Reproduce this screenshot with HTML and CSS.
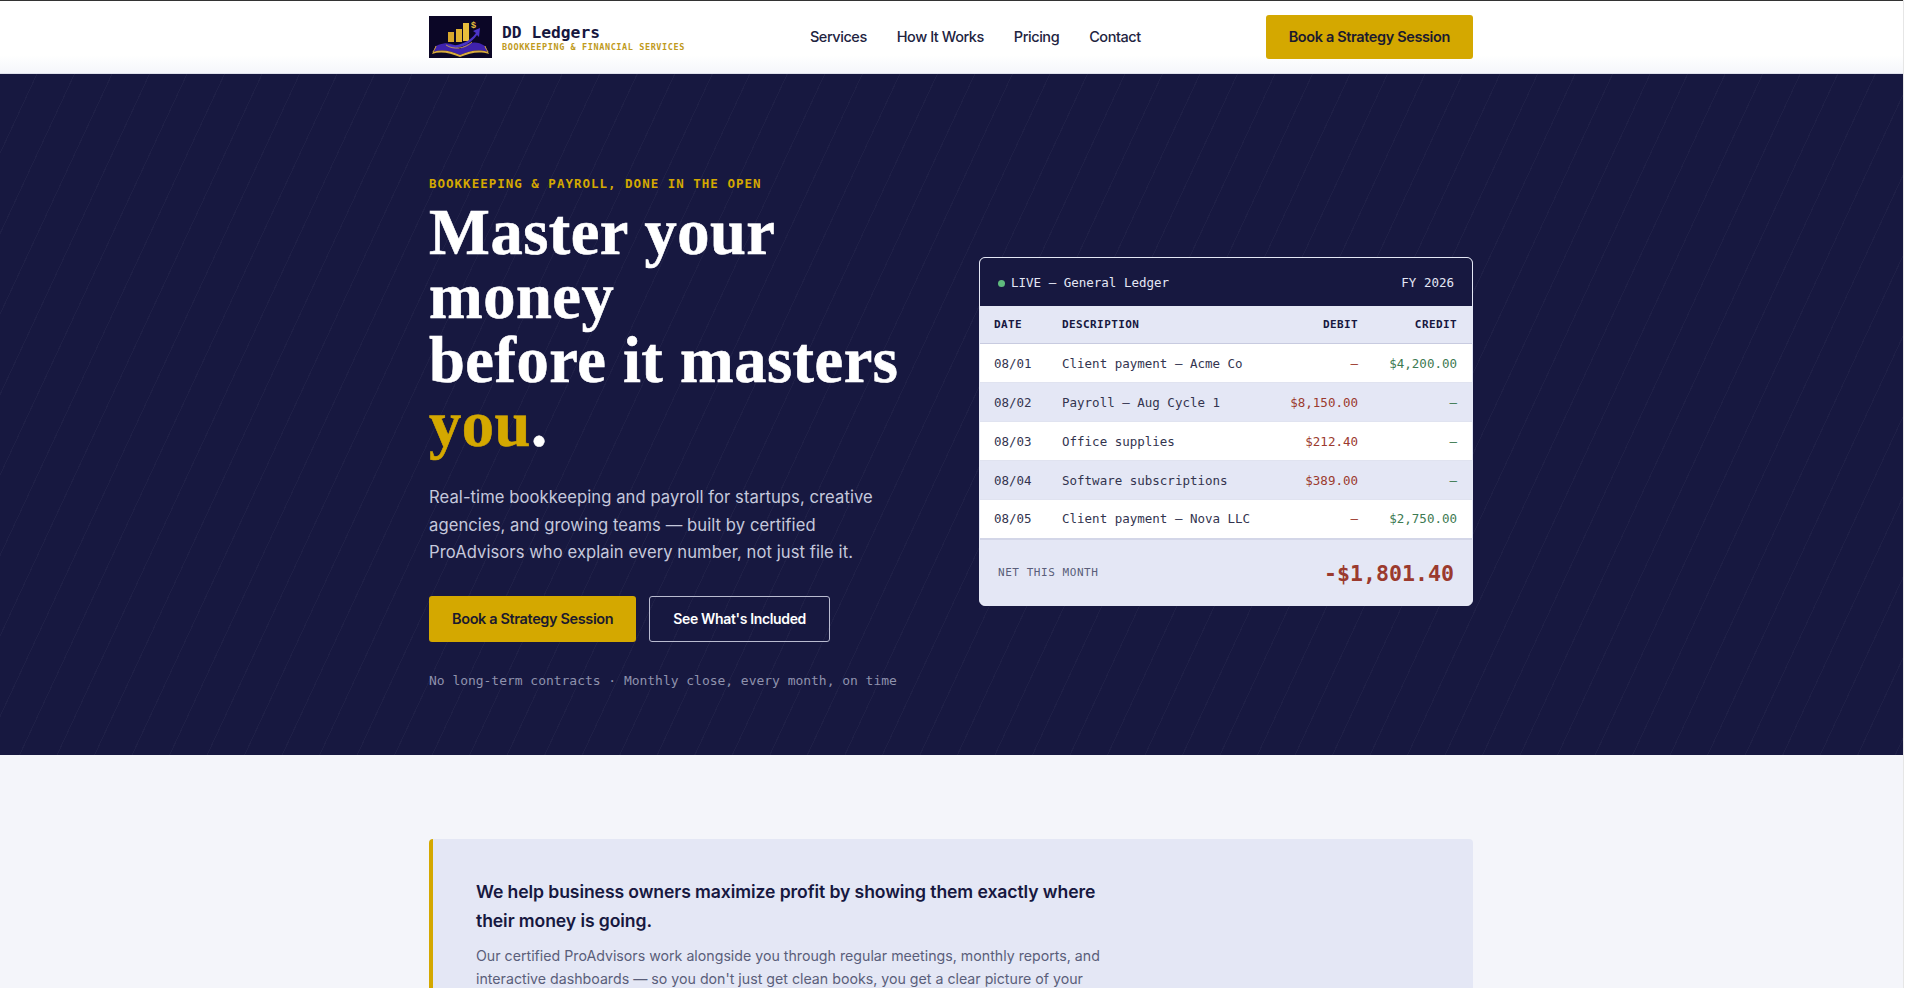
FILE: index.html
```html
<!DOCTYPE html>
<html>
<head>
    <title>DD Ledgers</title>
    <link rel="stylesheet" href="styles.css">
</head>
<body>
<div class="page">
    <header class="nav">
        <div class="wrap nav-inner">
            <a class="brand" href="#">
                <svg class="logo" viewBox="0 0 63 42">
                    <rect width="63" height="42" fill="#0b0626"/>
                    <path d="M7 30 C16 25 25 27 31 33 C38 26 47 24 56 30 L59 36 C49 33 40 35 31 39 C22 35 13 33 4 36 Z" fill="#3f22ad"/>
                    <path d="M4 36 C13 33 22 35 31 39 C40 35 49 33 59 36 L60 38 C50 35 41 37 31 41 C21 37 12 35 3 38 Z" fill="#d9ab3c"/>
                    <path d="M7 30 C6 33 5 34 4 36" stroke="#d9ab3c" stroke-width="1" fill="none"/>
                    <path d="M56 30 C57 33 58 34 59 36" stroke="#d9ab3c" stroke-width="1" fill="none"/>
                    <rect x="19" y="16" width="6" height="10" fill="#d8a72c"/>
                    <rect x="27" y="13" width="6" height="13" fill="#e0b232"/>
                    <rect x="34" y="7" width="6" height="18" fill="#e8bd3c"/>
                    <path d="M15 26 C17 31 36 32 47 17 L44 15 L51 12 L50 21 L48 19 C38 33 20 36 15 26 Z" fill="#4a34c8"/>
                    <path d="M17 29 C24 34 36 33 43 26" stroke="#d9ab3c" stroke-width=".8" fill="none"/>
                    <text x="42" y="12" class="logo-dollar">$</text>
                </svg>
                <span class="brand-text">
                    <span class="brand-name">DD Ledgers</span>
                    <span class="brand-sub">BOOKKEEPING &amp; FINANCIAL SERVICES</span>
                </span>
            </a>
            <nav class="nav-links">
                <a href="#">Services</a>
                <a href="#">How It Works</a>
                <a href="#">Pricing</a>
                <a href="#">Contact</a>
            </nav>
            <a class="btn btn-gold btn-nav" href="#">Book a Strategy Session</a>
        </div>
    </header>

    <section class="hero">
        <div class="wrap hero-grid">
            <div class="hero-copy">
                <p class="eyebrow">BOOKKEEPING &amp; PAYROLL, DONE IN THE OPEN</p>
                <h1>Master your<br>money<br>before it masters<br><em>you</em>.</h1>
                <p class="lede">Real-time bookkeeping and payroll for startups, creative<br>agencies, and growing teams — built by certified<br>ProAdvisors who explain every number, not just file it.</p>
                <div class="hero-btns">
                    <a class="btn btn-gold" href="#">Book a Strategy Session</a>
                    <a class="btn btn-line" href="#">See What's Included</a>
                </div>
                <p class="note">No long-term contracts · Monthly close, every month, on time</p>
            </div>

            <div class="ledger">
                <div class="ledger-head">
                    <span><i class="dot"></i>LIVE — General Ledger</span>
                    <span>FY 2026</span>
                </div>
                <table>
                    <thead>
                        <tr><th class="c-date">DATE</th><th>DESCRIPTION</th><th class="num c-debit">DEBIT</th><th class="num c-credit">CREDIT</th></tr>
                    </thead>
                    <tbody>
                        <tr><td>08/01</td><td>Client payment — Acme Co</td><td class="num red">—</td><td class="num green">$4,200.00</td></tr>
                        <tr><td>08/02</td><td>Payroll — Aug Cycle 1</td><td class="num red">$8,150.00</td><td class="num green">—</td></tr>
                        <tr><td>08/03</td><td>Office supplies</td><td class="num red">$212.40</td><td class="num green">—</td></tr>
                        <tr><td>08/04</td><td>Software subscriptions</td><td class="num red">$389.00</td><td class="num green">—</td></tr>
                        <tr><td>08/05</td><td>Client payment — Nova LLC</td><td class="num red">—</td><td class="num green">$2,750.00</td></tr>
                    </tbody>
                </table>
                <div class="ledger-foot">
                    <span class="net-label">NET THIS MONTH</span>
                    <span class="net-value">-$1,801.40</span>
                </div>
            </div>
        </div>
    </section>

    <section class="about">
        <div class="wrap">
            <div class="callout">
                <h2>We help business owners maximize profit by showing them exactly where their money is going.</h2>
                <p>Our certified ProAdvisors work alongside you through regular meetings, monthly reports, and interactive dashboards — so you don't just get clean books, you get a clear picture of your</p>
            </div>
        </div>
    </section>
</div>
</body>
</html>
```

FILE: styles.css
```css
* { box-sizing: border-box; }
html, body { margin: 0; height: 988px; overflow: hidden; background: #fff; }
body { font-family: "Inter", "Liberation Sans", sans-serif; color: #171840; }
a { text-decoration: none; color: inherit; }
p, h1, h2 { margin: 0; }

.page { margin-right: 3px; height: 988px; background: #f4f5fa; border-top: 1px solid #333; box-shadow: 1px 0 0 #e6e6e6; }
.wrap { width: 1044px; margin-left: 429px; }

/* nav */
.nav { height: 73px; background: linear-gradient(#fff 75%, #f5f6fb); border-bottom: 1px solid #dfe1ec; }
.nav-inner { height: 72px; display: flex; align-items: center; justify-content: space-between; }
.brand { display: flex; align-items: center; gap: 10px; }
.logo { width: 63px; height: 42px; display: block; }
.logo-dollar { font: 700 9px "Liberation Sans", sans-serif; fill: #e8bd3c; }
.brand-text { display: flex; flex-direction: column; font-family: "DejaVu Sans Mono", monospace; font-weight: 700; }
.brand-name { font-size: 16.3px; line-height: 19px; color: #171840; }
.brand-sub { font-size: 8.5px; line-height: 10px; letter-spacing: .6px; color: #c09a1c; }
.nav-links { display: flex; gap: 30px; padding-bottom: 2px; font-size: 14.5px; font-weight: 500; letter-spacing: -.45px; color: #22233f; }

.btn { display: flex; align-items: center; height: 46px; border-radius: 3px; font-size: 14.5px; font-weight: 600; letter-spacing: -.37px; }
.btn-gold { padding: 0 23px; background: #d4a800; color: #1b1a2e; }
.btn-nav { height: 44px; padding-bottom: 2px; }
.btn-line { padding: 0 23px; border: 1px solid #b9bbd0; color: #fff; font-size: 14px; letter-spacing: -.35px; }

/* hero */
.hero {
    height: 681px;
    padding: 96px 0 63px;
    background: #171840 repeating-linear-gradient(115deg, transparent 0 33px, rgba(255,255,255,.032) 33px 34px);
}
.hero-grid { display: grid; grid-template-columns: 1fr 494px; align-items: center; height: 522px; }
.hero-copy { align-self: start; }
.eyebrow { font-family: "DejaVu Sans Mono", monospace; font-size: 12.5px; line-height: 20px; letter-spacing: 1px; color: #d4a800; margin-top: 4px; margin-bottom: 7px; font-weight: 700; }
h1 { font-family: "Liberation Serif", serif; font-weight: 700; font-size: 64.5px; line-height: 64px; letter-spacing: .5px; color: #fff; -webkit-text-stroke: .6px currentColor; }
h1 em { font-style: normal; color: #d4a800; }
.lede { margin-top: 27px; font-size: 16.6px; line-height: 27.5px; letter-spacing: .07px; color: #c5c8dc; }
.hero-btns { display: flex; gap: 13px; margin-top: 29px; }
.note { margin-top: 29px; font-family: "DejaVu Sans Mono", monospace; font-size: 13px; line-height: 20px; letter-spacing: -.03px; color: #8f92ad; }

/* ledger card */
.ledger { border: 1px solid #e4e7f5; border-radius: 6px; overflow: hidden; background: #fff; font-family: "DejaVu Sans Mono", monospace; }
.ledger-head { height: 48px; padding: 2px 18px 0; display: flex; align-items: center; justify-content: space-between; background: #171840; color: #e4e7f5; font-size: 12.5px; }
.dot { display: inline-block; width: 7px; height: 7px; margin-right: 6px; border-radius: 50%; background: #5fba7d; }
table { width: 100%; border-collapse: collapse; table-layout: fixed; font-size: 12.5px; color: #33344f; }
th { height: 38px; padding: 0 14px; background: #e4e7f5; border-bottom: 1px solid #c8cbe0; font-size: 11px; font-weight: 700; letter-spacing: .4px; color: #171840; text-align: left; }
.c-date { width: 68px; }
.c-debit { width: 110px; }
.c-credit { width: 100px; }
td { height: 39px; padding: 0 14px; border-bottom: 1px solid #e0e3f0; white-space: nowrap; }
td:last-child, th:last-child { padding-right: 15px; }
tbody tr:nth-child(even) td { background: #e4e7f5; }
tbody tr:last-child td { border-bottom: 2px solid #d3d6e8; }
.num { text-align: right; }
.red { color: #9b3a2e; }
.green { color: #3d7a52; }
.ledger-foot { height: 65px; padding: 3px 18px 0; display: flex; align-items: center; justify-content: space-between; background: #e4e7f5; }
.net-label { font-size: 11px; letter-spacing: .55px; color: #5a5e7a; margin-top: -3px; }
.net-value { font-size: 21.6px; font-weight: 700; color: #9b3a2e; }

/* about */
.about { padding-top: 84px; }
.callout { height: 149px; padding: 38px 43px 0; background: #e4e7f5; border-left: 4px solid #d4a800; border-radius: 4px 4px 0 0; }
.callout h2 { width: 640px; font-size: 17.6px; line-height: 29px; font-weight: 600; color: #171840; letter-spacing: -.1px; }
.callout p { width: 640px; margin-top: 9px; font-size: 14.2px; line-height: 23px; color: #5a5e7a; }
```
